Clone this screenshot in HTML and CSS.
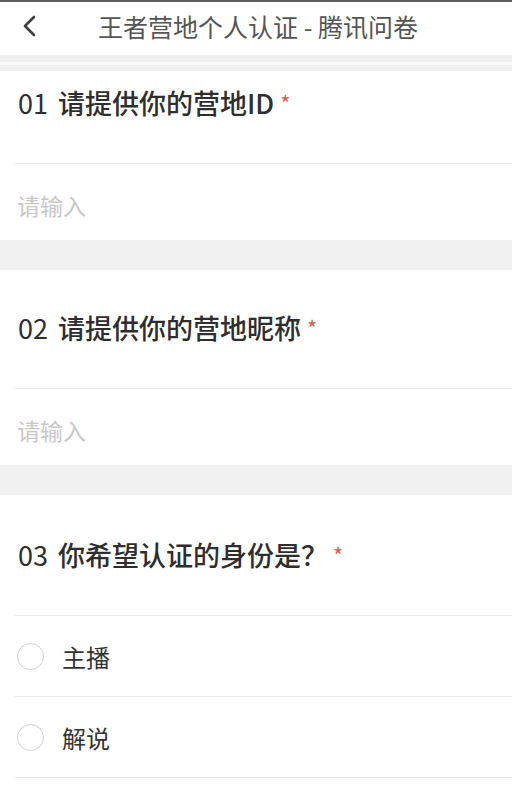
FILE: index.html
```html
<!DOCTYPE html>
<html lang="zh-CN">
<head>
<meta charset="utf-8">
<title>王者营地个人认证 - 腾讯问卷</title>
<link rel="stylesheet" href="styles.css">
</head>
<body>
<div class="page">
  <header class="topbar">
    <div class="back">
      <svg width="16" height="24" viewBox="0 0 16 24"><polyline points="12,3 3,12 12,21" fill="none" stroke="#3f3f3f" stroke-width="2.6" stroke-linecap="round" stroke-linejoin="round"/></svg>
    </div>
    <div class="title">王者营地个人认证 - 腾讯问卷</div>
    <div class="spacer"></div>
  </header>
  <div class="gap-top"><div class="gap-line"></div></div>

  <section class="q q-first">
    <div class="q-title"><span class="num">01</span>请提供你的营地ID<span class="req">*</span></div>
    <div class="q-input">请输入</div>
  </section>
  <div class="gap"></div>

  <section class="q">
    <div class="q-title"><span class="num">02</span>请提供你的营地昵称<span class="req">*</span></div>
    <div class="q-input">请输入</div>
  </section>
  <div class="gap"></div>

  <section class="q q-third">
    <div class="q-title"><span class="num">03</span>你希望认证的身份是？<span class="req req-wide">*</span></div>
    <div class="opt"><span class="radio"></span><span class="opt-label">主播</span></div>
    <div class="opt"><span class="radio"></span><span class="opt-label">解说</span></div>
  </section>
</div>
</body>
</html>
```
FILE: styles.css
```css
html, body {
  margin: 0;
  padding: 0;
  background: #ffffff;
}
body {
  font-family: "Noto Sans CJK SC", "Noto Sans", sans-serif;
  color: #333333;
  overflow: hidden;
}
.page {
  width: 512px;
  height: 786px;
  overflow: hidden;
  background: #ffffff;
}
.topbar {
  border-top: 2px solid #5c5c5c;
  height: 53px;
  display: grid;
  grid-template-columns: 60px 1fr 60px;
  align-items: center;
  background: #ffffff;
}
.back {
  display: flex;
  align-items: center;
  padding-left: 22px;
  padding-bottom: 6px;
}
.title {
  text-align: center;
  font-size: 25px;
  color: #555555;
  line-height: 30px;
  padding-bottom: 6px;
  padding-left: 4px;
  white-space: nowrap;
}
.gap-top {
  height: 16px;
  background: #efefef;
  padding-top: 7px;
  box-sizing: border-box;
}
.gap-line {
  height: 3px;
  background: #f9f9f9;
}
.gap {
  height: 30px;
  background: #f1f1f1;
}
.q {
  background: #ffffff;
}
.q-title {
  font-size: 27px;
  line-height: 36px;
  height: 36px;
  padding: 40px 0 42px 18px;
  color: #2e2e2e;
  font-weight: 500;
  white-space: nowrap;
  position: relative;
}
.q-first .q-title {
  padding-top: 14px;
}
.q-third .q-title {
  padding-top: 42px;
}
.num {
  margin-right: 10px;
  font-weight: 400;
}
.req {
  color: #e05a4e;
  font-size: 22px;
  line-height: 0;
  margin-left: 6px;
  position: relative;
  top: -2px;
  font-weight: 400;
}
.req-wide {
  margin-left: 5px;
}
.q-title::after {
  content: "";
  position: absolute;
  left: 15px;
  right: 0;
  bottom: -1px;
  height: 1px;
  background: #eaeaea;
}
.q-input {
  font-size: 23px;
  line-height: 36px;
  height: 36px;
  padding: 23px 0 17px 17px;
  margin-top: 1px;
  color: #c8c8c8;
}
.opt {
  height: 81px;
  display: flex;
  align-items: center;
  padding-left: 17px;
  position: relative;
}
.q-third .q-title + .opt {
  margin-top: 1px;
}
.opt::after {
  content: "";
  position: absolute;
  left: 15px;
  right: 0;
  bottom: 0;
  height: 1px;
  background: #eaeaea;
}
.radio {
  width: 25px;
  height: 25px;
  border: 1.6px solid #cfcfcf;
  border-radius: 50%;
  flex: none;
}
.opt-label {
  font-size: 24px;
  color: #333333;
  margin-left: 18px;
  line-height: 32px;
}
```
